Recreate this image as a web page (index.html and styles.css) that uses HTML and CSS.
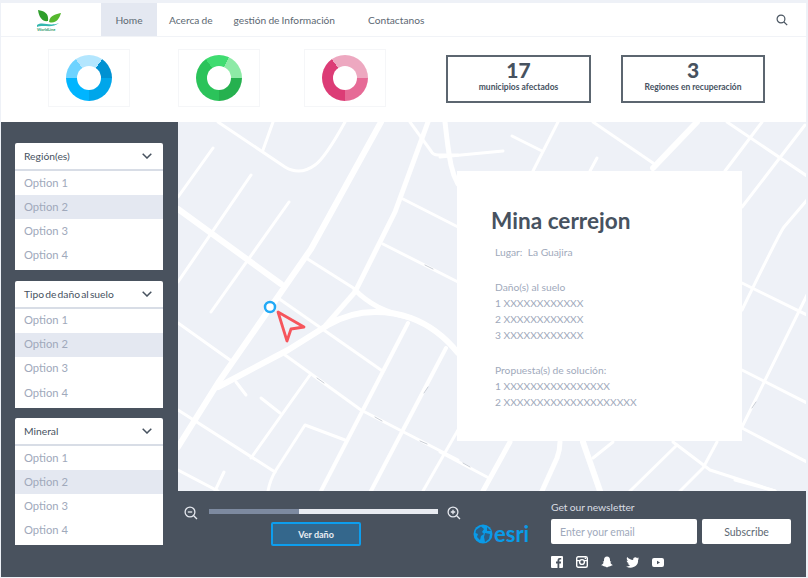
FILE: index.html
```html
<!DOCTYPE html>
<html lang="es">
<head>
    <meta charset="UTF-8">
    <meta name="viewport" content="width=device-width, initial-scale=1.0">
    <title>Mina cerrejon</title>
    <link rel="stylesheet" href="styles.css">
</head>
<body>
    <div class="page">
        <nav class="nav">
            <div class="logo">
                <svg width="26" height="17" viewBox="0 0 26 17">
                    <path d="M2 0 C8 1 13 3 12 11 C7 12 3 8 2 0Z" fill="#2f9e2c"/>
                    <path d="M25 3 C22 4 14 4 13 12 C19 14 23 10 25 3Z" fill="#55b82e"/>
                    <path d="M1 15 C7 11 13 17 23 13 C16 19 7 14 1 17Z" fill="#35b8b0"/>
                </svg>
                <span class="logo-name">WorldLine</span>
            </div>
            <a class="nav-link active home">Home</a>
            <a class="nav-link about">Acerca de</a>
            <a class="nav-link info">gestión de Información</a>
            <a class="nav-link contact">Contactanos</a>
            <svg class="search" width="12" height="12" viewBox="0 0 12 12" fill="none" stroke="#4a5561" stroke-width="1.2">
                <circle cx="5" cy="5" r="3.9"/>
                <path d="M8 8 L11.2 11.2"/>
            </svg>
        </nav>

        <section class="stats">
            <div class="chart-box first"><div class="donut blue"></div></div>
            <div class="chart-box second"><div class="donut green"></div></div>
            <div class="chart-box third"><div class="donut pink"></div></div>
            <div class="stat-box one">
                <div class="stat-num">17</div>
                <div class="stat-label">municipios afectados</div>
            </div>
            <div class="stat-box two">
                <div class="stat-num">3</div>
                <div class="stat-label">Regiones en recuperación</div>
            </div>
        </section>

        <div class="main">
            <aside class="sidebar">
                <div class="dropdown">
                    <div class="dropdown-head">Región(es)
                        <svg width="10" height="6" viewBox="0 0 10 6" fill="none" stroke="#47525f" stroke-width="1.5"><path d="M.7 .7 L5 5 L9.3 .7"/></svg>
                    </div>
                    <div class="option">Option 1</div>
                    <div class="option selected">Option 2</div>
                    <div class="option">Option 3</div>
                    <div class="option">Option 4</div>
                </div>
                <div class="dropdown">
                    <div class="dropdown-head">Tipo de daño al suelo
                        <svg width="10" height="6" viewBox="0 0 10 6" fill="none" stroke="#47525f" stroke-width="1.5"><path d="M.7 .7 L5 5 L9.3 .7"/></svg>
                    </div>
                    <div class="option">Option 1</div>
                    <div class="option selected">Option 2</div>
                    <div class="option">Option 3</div>
                    <div class="option">Option 4</div>
                </div>
                <div class="dropdown">
                    <div class="dropdown-head">Mineral
                        <svg width="10" height="6" viewBox="0 0 10 6" fill="none" stroke="#47525f" stroke-width="1.5"><path d="M.7 .7 L5 5 L9.3 .7"/></svg>
                    </div>
                    <div class="option">Option 1</div>
                    <div class="option selected">Option 2</div>
                    <div class="option">Option 3</div>
                    <div class="option">Option 4</div>
                </div>
            </aside>

            <div class="content">
                <div class="map">
                    <svg class="roads" width="628" height="369" viewBox="178 122 628 369" fill="none" stroke="#fff" stroke-linecap="round" stroke-linejoin="round">
                        <g stroke-width="3">
                            <path d="M218 122 L285 167 Q300 176 315 165 Q325 158 345 122"/>
                            <path d="M273 122 L263 150"/>
                            <path d="M213 148 L178 197"/>
                            <path d="M251 175 L178 282"/>
                            <path d="M289 202 L211 312"/>
                            <path d="M410 122 L431 151 Q433 155 438 155 L458 155"/>
                            <path d="M403 199 L458 227"/>
                            <path d="M383 244 L458 282"/>
                            <path d="M278 298 L381 370"/>
                            <path d="M306 258 L355 289"/>
                            <path d="M178 323 L230 360"/>
                            <path d="M285 355 L361 410 L458 460"/>
                            <path d="M310 375 L251 458"/>
                            <path d="M178 410 L275 472"/>
                            <path d="M261 398 L280 413"/>
                            <path d="M236 382 L246 395"/>
                            <path d="M345 440 L305 425 L276 470 Q270 480 268 491"/>
                            <path d="M178 470 L218 491"/>
                            <path d="M224 472 L215 491"/>
                            <path d="M458 430 L423 491"/>
                            <path d="M440 157 L503 151"/>
                            <path d="M512 136 L542 151"/>
                            <path d="M558 122 L533 171"/>
                            <path d="M597 158 L590 171"/>
                            <path d="M593 122 L653 163"/>
                            <path d="M727 122 L807 176"/>
                            <path d="M762 122 L725 171"/>
                            <path d="M805 125 L742 207"/>
                            <path d="M807 200 L784 227 Q780 232 742 310"/>
                            <path d="M742 283 L807 315"/>
                            <path d="M807 295 L742 427"/>
                            <path d="M742 370 L807 403"/>
                            <path d="M742 428 L807 462"/>
                            <path d="M735 480 L775 491"/>
                            <path d="M440 452 L487 477"/>
                            <path d="M613 442 L593 458"/>
                            <path d="M677 445 L630 491"/>
                            <path d="M673 442 L710 470 L775 491"/>
                            <path d="M717 442 L703 468 L680 491"/>
                        </g>
                        <g stroke-width="4">
                            <path d="M408 323 L321 491"/>
                            <path d="M446 348 L371 491"/>
                        </g>
                        <g stroke-width="5">
                            <path d="M445 122 Q448 150 451 165 Q453 175 458 184"/>
                            <path d="M428 122 L395 212 L355 292 L326 325"/>
                            <path d="M355 290 Q365 300 378 307 Q392 314 411 318"/>
                            <path d="M510 442 L483 491"/>
                            <path d="M560 442 Q560 450 557 458 L542 491"/>
                        </g>
                        <g stroke-width="6">
                            <path d="M178 209 L281 284"/>
                            <path d="M381 122 L311 249 L218 383 L178 447"/>
                            <path d="M218 387 L288 350 L328 325 Q350 312 375 312 Q395 312 411 318 Q438 328 458 353"/>
                            <path d="M583 442 L600 491"/>
                            <path d="M697 122 L653 168"/>
                        </g>
                        <g stroke="#c9ced6" stroke-width="1">
                            <path d="M425 265 L433 269"/>
                            <path d="M317 378 L324 383"/>
                            <path d="M375 417 L382 421"/>
                            <path d="M420 441 L427 444"/>
                            <path d="M424 393 L428 387"/>
                            <path d="M752 408 L756 402"/>
                            <path d="M463 463 L470 467"/>
                        </g>
                        <circle cx="270" cy="307" r="5" fill="#fff" stroke="#22a9f6" stroke-width="2.5"/>
                        <path d="M278 312 L304 327 L291 329 L287 341Z" stroke="#f6555c" stroke-width="2.8"/>
                    </svg>
                    <article class="card">
                        <h1>Mina cerrejon</h1>
                        <p class="card-text">Lugar:&nbsp; La Guajira</p>
                        <p class="card-text">Daño(s) al suelo<br>1 XXXXXXXXXXXX<br>2 XXXXXXXXXXXX<br>3 XXXXXXXXXXXX</p>
                        <p class="card-text">Propuesta(s) de solución:<br>1 XXXXXXXXXXXXXXXX<br>2 XXXXXXXXXXXXXXXXXXXX</p>
                    </article>
                </div>

                <footer class="bottom">
                    <div class="controls">
                        <div class="zoom-row">
                            <svg width="14" height="14" viewBox="0 0 14 14" fill="none" stroke="#e6e9ef" stroke-width="1.3">
                                <circle cx="6" cy="6" r="4.9"/>
                                <path d="M3.8 6 H8.2"/>
                                <path d="M9.7 9.7 L13 13"/>
                            </svg>
                            <div class="slider"><div class="slider-fill"></div></div>
                            <svg width="14" height="14" viewBox="0 0 14 14" fill="none" stroke="#e6e9ef" stroke-width="1.3">
                                <circle cx="6" cy="6" r="4.9"/>
                                <path d="M3.8 6 H8.2 M6 3.8 V8.2"/>
                                <path d="M9.7 9.7 L13 13"/>
                            </svg>
                        </div>
                        <button class="view-btn" type="button">Ver daño</button>
                    </div>
                    <div class="esri">
                        <svg width="20" height="20" viewBox="0 0 20 20">
                            <circle cx="10" cy="10" r="9.5" fill="#0a9be8"/>
                            <path d="M3 6 L8 2.5 L11 5 L9 8 L11 10 L8 12 L7 16 L4 13 L5 10 L2.5 9Z M12 9 L17 10 L16 15 L12 18 L11 13Z M14 3 L18 7 L14 7Z" fill="#2b5f86"/>
                        </svg>
                        <span>esri</span>
                    </div>
                    <div class="newsletter">
                        <div class="news-title">Get our newsletter</div>
                        <div class="news-form">
                            <input class="news-input" type="text" placeholder="Enter your email">
                            <button class="news-btn" type="button">Subscribe</button>
                        </div>
                        <div class="social">
                            <svg width="12" height="12" viewBox="0 0 12 12"><path fill-rule="evenodd" d="M1 0 H11 Q12 0 12 1 V11 Q12 12 11 12 H8.3 V7.4 H9.9 L10.1 5.6 H8.3 V4.5 Q8.3 3.6 9.2 3.6 H10.2 V2 H8.7 Q6.5 2 6.5 4.3 V5.6 H5 V7.4 H6.5 V12 H1 Q0 12 0 11 V1 Q0 0 1 0Z" fill="#fff"/></svg>
                            <svg width="12" height="12" viewBox="0 0 12 12" fill="none" stroke="#fff" stroke-width="1.4"><rect x=".7" y=".7" width="10.6" height="10.6" rx="1.5"/><circle cx="6" cy="6" r="2.4"/><path d="M.7 4.6 H3.8 M8.2 4.6 H11.3 M9.4 1.5 V3"/></svg>
                            <svg width="12" height="12" viewBox="0 0 12 12"><path d="M6 .5 C8 .5 9 2 9 4 L9 5.5 L10.3 5.3 L9.5 6.8 C9.8 7.8 10.6 8.5 11.7 8.9 C11 9.6 10.2 9.5 9.8 9.9 C9 10.2 7.8 10.2 6 11.5 C4.2 10.2 3 10.2 2.2 9.9 C1.8 9.5 1 9.6 .3 8.9 C1.4 8.5 2.2 7.8 2.5 6.8 L1.7 5.3 L3 5.5 L3 4 C3 2 4 .5 6 .5Z" fill="#fff"/></svg>
                            <svg width="13" height="11" viewBox="0 0 13 11"><path d="M13 1.3 Q12.3 1.7 11.5 1.8 Q12.4 1.2 12.7 .3 Q11.9 .8 11 .9 C9.5 -.6 6.7 .6 7.2 3 C4.8 2.9 2.6 1.8 1.2 .1 C.4 1.4 .8 3.1 2 3.9 Q1.3 3.9 .7 3.6 C.7 4.9 1.6 6 2.9 6.3 Q2.2 6.5 1.6 6.3 C2 7.4 3 8.1 4.1 8.2 C3 9.1 1.6 9.5 0 9.4 C6 13 13 8.8 12 3 Q12.6 2.3 13 1.3Z" fill="#fff"/></svg>
                            <svg width="12" height="9" viewBox="0 0 12 9"><path fill-rule="evenodd" d="M2 0 H10 Q12 0 12 2 V7 Q12 9 10 9 H2 Q0 9 0 7 V2 Q0 0 2 0Z M5 2.7 V6.3 L8 4.5Z" fill="#fff"/></svg>
                        </div>
                    </div>
                </footer>
            </div>
        </div>
    </div>
</body>
</html>
```

FILE: styles.css
```css
* {
    box-sizing: border-box;
}

body {
    margin: 0;
    font-family: Lato, "Open Sans", sans-serif;
    background-color: #eef1f7;
}

.page {
    width: 808px;
    height: 578px;
    padding: 3px 2px 1px 1px;
    display: flex;
    flex-direction: column;
    overflow: hidden;
}

/* top menu */
.nav {
    height: 34px;
    background-color: #fff;
    border-bottom: 1px solid #f1f3f7;
    display: flex;
    align-items: stretch;
    flex-shrink: 0;
}

.logo {
    width: 100px;
    padding: 7px 0 0 35px;
    display: flex;
    flex-direction: column;
    align-items: flex-start;
}

.logo-name {
    font-size: 4px;
    font-weight: 700;
    line-height: 6px;
    color: #2a9a6a;
    margin-left: 1px;
}

.nav-link {
    font-size: 10.2px;
    word-spacing: -0.5px;
    color: #5d6873;
    display: flex;
    align-items: center;
    justify-content: center;
}

.home {
    width: 56px;
}

.active {
    background-color: #e4e8f1;
}

.about {
    margin-left: 12px;
}

.info {
    margin-left: 21px;
}

.contact {
    margin-left: 33px;
}

.search {
    margin: 11px 18px 0 auto;
}

/* charts and counters */
.stats {
    height: 85px;
    background-color: #fff;
    display: flex;
    flex-shrink: 0;
}

.chart-box {
    width: 82px;
    height: 58px;
    margin-top: 12px;
    border: 1px solid #f5f6f8;
    display: flex;
    align-items: center;
    justify-content: center;
}

.first {
    margin-left: 47px;
}

.second {
    margin-left: 48px;
}

.third {
    margin-left: 44px;
}

.donut {
    width: 46px;
    height: 46px;
    border-radius: 50%;
    display: flex;
    align-items: center;
    justify-content: center;
}

.donut::after {
    content: "";
    width: 24px;
    height: 24px;
    border-radius: 50%;
    background-color: #fff;
}

.blue {
    background: conic-gradient(#b3e6fe 0 35deg, #0091d2 35deg 90deg, #00a6ea 90deg 180deg, #00b5ff 180deg 270deg, #6dd3ff 270deg 325deg, #b3e6fe 325deg);
}

.green {
    background: conic-gradient(#3fdc70 0 25deg, #8deaa6 25deg 90deg, #26b14f 90deg 180deg, #2bc35a 180deg 325deg, #3fdc70 325deg);
}

.pink {
    background: conic-gradient(#eda8c0 0 90deg, #e66a96 90deg 180deg, #dc3c76 180deg 325deg, #eda8c0 325deg);
}

.stat-box {
    width: 145px;
    height: 48px;
    margin-top: 18px;
    border: 2px solid #5c6670;
    text-align: center;
    color: #47525f;
}

.one {
    margin-left: 60px;
}

.two {
    width: 144px;
    margin-left: 30px;
}

.stat-num {
    font-size: 21px;
    font-weight: 900;
    line-height: 25px;
}

.stat-label {
    font-size: 8.5px;
    font-weight: 700;
    line-height: 11px;
}

/* sidebar + map */
.main {
    flex: 1;
    display: flex;
    min-height: 0;
}

.sidebar {
    width: 177px;
    background-color: #49525e;
    padding: 21px 15px 0 14px;
    display: flex;
    flex-direction: column;
    gap: 10.5px;
    flex-shrink: 0;
}

.dropdown {
    height: 127px;
    background-color: #fff;
    border-radius: 2px 2px 0 0;
}

.dropdown-head {
    height: 28px;
    padding: 0 11px 0 9px;
    border-bottom: 2px solid #d8dde6;
    font-size: 10.3px;
    word-spacing: -1.5px;
    color: #47525f;
    display: flex;
    align-items: center;
    justify-content: space-between;
}

.option {
    height: 24.2px;
    padding: 0 0 2px 9px;
    font-size: 11.2px;
    color: #a0a9bb;
    display: flex;
    align-items: center;
}

.selected {
    background-color: #e4e8f1;
}

.content {
    flex: 1;
    display: flex;
    flex-direction: column;
    min-width: 0;
}

.map {
    height: 369px;
    position: relative;
    background-color: #eef1f7;
    flex-shrink: 0;
}

.roads {
    display: block;
}

.card {
    position: absolute;
    left: 279px;
    top: 49px;
    width: 285px;
    height: 270px;
    background-color: #fff;
    padding: 36px 0 0 34px;
}

.card h1 {
    margin: 0 0 11px;
    font-size: 22.6px;
    font-weight: 700;
    line-height: 27px;
    color: #47525f;
}

.card-text {
    margin: 0 0 19.5px 4px;
    font-size: 10.25px;
    line-height: 15.8px;
    color: #a0a9bb;
}

/* bottom bar */
.bottom {
    flex: 1;
    background-color: #49525e;
    display: flex;
}

.controls {
    width: 295px;
    padding: 15px 0 0 6px;
    display: flex;
    flex-direction: column;
}

.zoom-row {
    display: flex;
    align-items: flex-start;
    gap: 10px;
}

.slider {
    width: 229px;
    height: 5px;
    margin: 3px -1px 0 1px;
    background-color: #e8ebf1;
}

.slider-fill {
    width: 90px;
    height: 100%;
    background-color: #7d8aa0;
}

.view-btn {
    width: 90px;
    height: 24px;
    margin: 2px 0 0 87px;
    background-color: #34678c;
    border: 2px solid #0d9eee;
    border-radius: 2px;
    font-family: inherit;
    font-size: 9px;
    font-weight: 700;
    color: #e9eef3;
}

.esri {
    width: 78px;
    padding-top: 33px;
    color: #0a9be8;
    display: flex;
    align-items: flex-start;
}

.esri span {
    margin-left: 1px;
    font-size: 22px;
    line-height: 20px;
    font-weight: 700;
}

.newsletter {
    padding-top: 9px;
}

.news-title {
    font-size: 10.3px;
    word-spacing: -0.5px;
    line-height: 14px;
    color: #d9dde3;
}

.news-form {
    margin-top: 5px;
    display: flex;
    gap: 5px;
}

.news-input {
    width: 146px;
    height: 25px;
    padding: 0 9px;
    border: none;
    border-radius: 2px;
    font-family: inherit;
    font-size: 10.5px;
    background-color: #fff;
}

.news-input::placeholder {
    color: #a0a9bb;
    opacity: 1;
}

.news-btn {
    width: 89px;
    height: 25px;
    border: none;
    border-radius: 2px;
    background-color: #fff;
    font-family: inherit;
    font-size: 10.5px;
    color: #5d6873;
}

.social {
    margin-top: 12px;
    display: flex;
    align-items: center;
    gap: 13px;
}
```
